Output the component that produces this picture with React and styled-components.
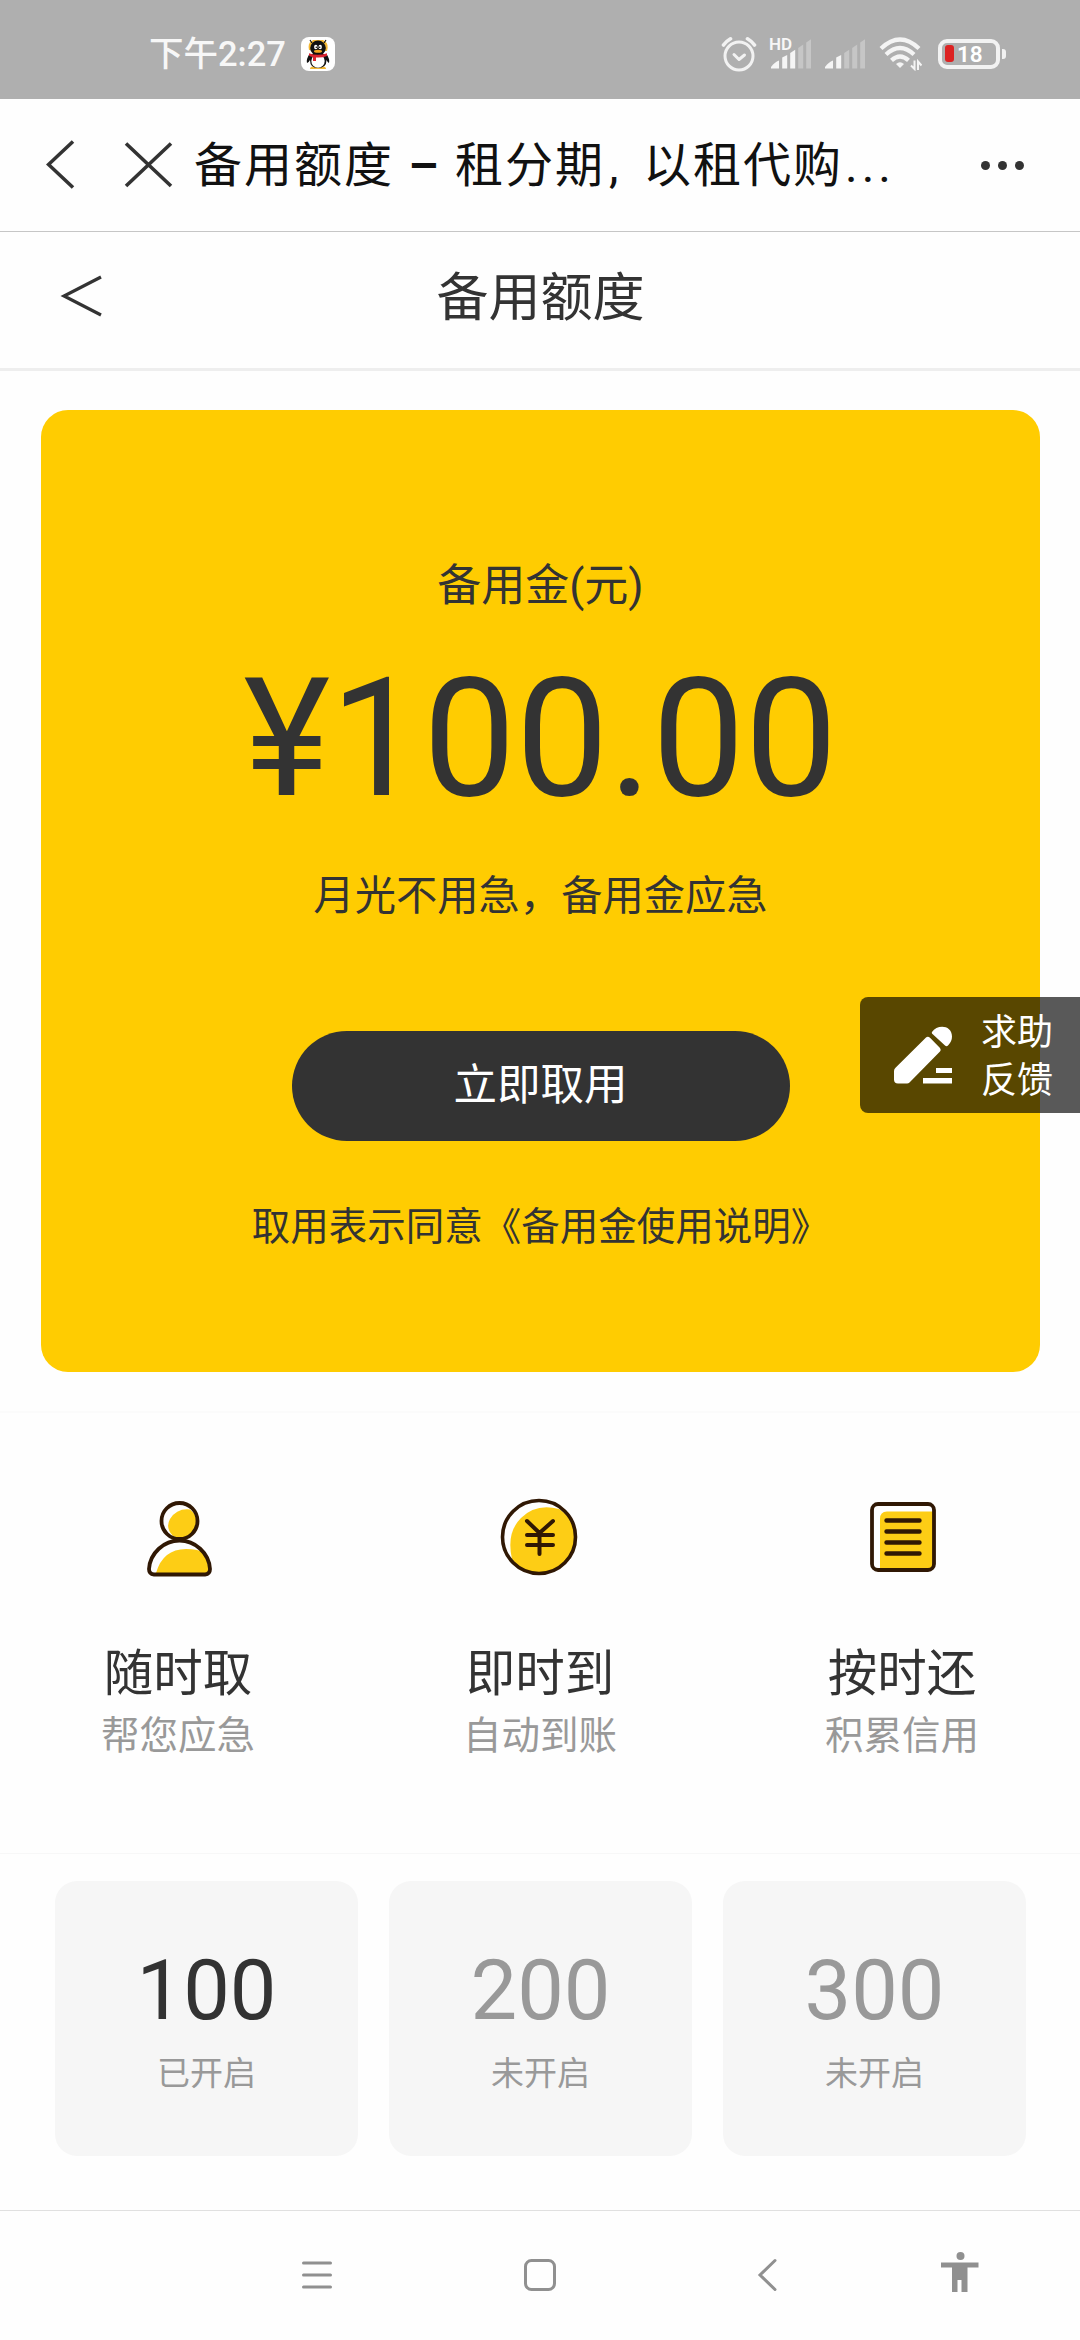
import React from 'react';
import styled, { createGlobalStyle } from 'styled-components';

const Global = createGlobalStyle`
  * { box-sizing: border-box; }
  body {
    margin: 0;
    background: #fefefe;
    font-family: Roboto, "Noto Sans CJK SC", sans-serif;
    color: #333;
  }
  svg { display: block; flex: none; }
`;

const Screen = styled.div`
  width: 1080px;
  height: 2340px;
  overflow: hidden;
  position: relative;
  display: flex;
  flex-direction: column;
  background: #fefefe;
`;

const StatusBar = styled.header`
  height: 99px;
  flex: none;
  background: #afafaf;
  display: flex;
  align-items: center;
  padding: 8px 74px 0 149px;
  color: #f7f7f7;
`;

const Clock = styled.span`
  font-size: 34.5px;
  font-weight: 500;
  line-height: 40px;
  width: 152px;
  padding-top: 1px;
  white-space: nowrap;
`;

const StatusIcons = styled.div`
  margin-left: auto;
  display: flex;
  align-items: center;
`;

const AppBar = styled.div`
  height: 133px;
  flex: none;
  border-bottom: 1px solid #c6c6c6;
  display: flex;
  align-items: center;
  padding: 0 56px 0 46px;
`;

const AppTitle = styled.h1`
  margin: 1px 0 0 20px;
  font-size: 48px;
  font-weight: 400;
  letter-spacing: 2px;
  line-height: 60px;
  color: #111;
  white-space: nowrap;
  display: flex;
`;

const Dash = styled.span`
  width: 61px;
  font-weight: 600;
  text-align: center;
`;

const Comma = styled.span`
  width: 38px;
  padding-left: 4px;
`;

const Ellipsis = styled.span`
  letter-spacing: 4px;
  padding-left: 2px;
`;

const More = styled.div`
  margin-left: auto;
  display: flex;
  gap: 8px;
  padding-top: 1px;
`;

const Dot = styled.i`
  width: 9px;
  height: 9px;
  border-radius: 50%;
  background: #333;
`;

const PageHeader = styled.div`
  height: 139px;
  flex: none;
  border-bottom: 3px solid #eeeeee;
  display: grid;
  grid-template-columns: 160px 1fr 160px;
  align-items: center;
`;

const BackSlot = styled.div`
  padding: 0 0 8px 60px;
`;

const PageTitle = styled.h2`
  margin: 0;
  padding: 0 0 3px 1px;
  text-align: center;
  font-size: 52px;
  font-weight: 400;
  line-height: 64px;
`;

const CreditSection = styled.section`
  height: 1042px;
  flex: none;
  padding: 39px 40px 0 41px;
  border-bottom: 2px solid #fbfbfb;
`;

const CreditCard = styled.div`
  height: 962px;
  border-radius: 27px;
  background: #ffcc01;
  display: flex;
  flex-direction: column;
  align-items: center;
`;

const Line = styled.p`
  margin: ${(p) => p.$top}px 0 0;
  font-size: ${(p) => p.$size}px;
  line-height: 60px;
  white-space: nowrap;
`;

const Amount = styled.strong`
  margin-top: 23px;
  font-size: 165px;
  font-weight: 400;
  line-height: 200px;
  white-space: nowrap;
`;

const TakeButton = styled.button`
  margin: 105px 0 0;
  width: 498px;
  height: 110px;
  border: 0;
  border-radius: 55px;
  background: #333;
  color: #fff;
  font: 400 43.5px/60px Roboto, "Noto Sans CJK SC", sans-serif;
  padding: 0 0 1px;
`;

const Features = styled.section`
  height: 441px;
  flex: none;
  padding-top: 76px;
  display: flex;
  justify-content: center;
  gap: 162px;
  border-bottom: 1px solid #f7f7f7;
`;

const Feature = styled.div`
  width: 200px;
  display: flex;
  flex-direction: column;
  align-items: center;
`;

const IconBox = styled.div`
  height: 100px;
  display: flex;
  align-items: center;
  padding: ${(p) => p.$pad};
`;

const FeatureTitle = styled.h3`
  margin: 52px 0 0;
  font-size: 49.5px;
  font-weight: 400;
  line-height: 66px;
`;

const FeatureNote = styled.p`
  margin: 2px 0 0;
  font-size: 38.5px;
  line-height: 54px;
  color: #999;
`;

const Tiers = styled.section`
  flex: none;
  height: 356px;
  padding: 27px 54px 0 55px;
  display: flex;
  justify-content: space-between;
`;

const Tier = styled.div`
  width: 303px;
  height: 275px;
  border-radius: 22px;
  background: #f6f6f6;
  display: flex;
  flex-direction: column;
  align-items: center;
`;

const TierValue = styled.span`
  margin-top: 60px;
  font-size: 83px;
  line-height: 100px;
  color: ${(p) => (p.$active ? '#333' : '#999')};
`;

const TierState = styled.span`
  margin-top: 9px;
  font-size: 33px;
  line-height: 48px;
  color: #999;
`;

const SystemNav = styled.nav`
  flex: 1;
  border-top: 1px solid #e0e0e0;
  display: grid;
  grid-template-columns: 223px 234px 184px 38px;
  align-items: start;
  padding: 40px 0 0 300px;
`;

const FeedbackTab = styled.aside`
  position: absolute;
  right: 0;
  top: 997px;
  width: 220px;
  height: 116px;
  border-radius: 8px 0 0 8px;
  background: rgba(0, 0, 0, 0.65);
  color: #fff;
  display: flex;
  align-items: center;
  padding-left: 34px;
`;

const FeedbackText = styled.span`
  margin: 3px 0 0 29px;
  width: 72px;
  font-size: 36px;
  line-height: 48px;
`;

const Penguin = () => (
  <svg width="34" height="34" viewBox="0 0 34 34">
    <rect width="34" height="34" rx="8" fill="#fff" />
    <path d="M8 13Q6.500 6 10.500 4.500L12 3h10l2 1.500Q28 7 26 14Z" fill="#f2b632" />
    <path d="M9 32Q9 29.500 12 29.500H22Q25 29.500 25 32Z" fill="#f2b632" />
    <path d="M8.500 17Q5 22 6 26Q7.500 26 9 23Q9 31 17 31Q25.500 31 25.500 23Q27 26 28 26Q29 22 25.500 17Z" fill="#111" />
    <ellipse cx="17" cy="24" rx="6.700" ry="6.700" fill="#fff" />
    <ellipse cx="17" cy="11" rx="7.800" ry="7.600" fill="#111" />
    <path d="M9 3l2 3M25 3l-2 3" stroke="#111" strokeWidth="1.200" />
    <ellipse cx="14.800" cy="10" rx="1.700" ry="2.300" fill="#fff" />
    <ellipse cx="19.200" cy="10" rx="1.700" ry="2.300" fill="#fff" />
    <circle cx="15.300" cy="10.300" r=".8" fill="#111" />
    <circle cx="18.700" cy="10.300" r=".8" fill="#111" />
    <ellipse cx="17" cy="14.300" rx="4" ry="1.500" fill="#f4a622" />
    <path d="M8 16.200Q17 19.500 26 16.200V19Q21 21 15 20.500V24H12V20Q9 19.500 8 18.500Z" fill="#dc2430" />
  </svg>
);

const AlarmSlot = styled.div`
  margin-right: 14px;
`;

const Alarm = () => (
  <AlarmSlot>
    <svg width="36" height="36" viewBox="0 0 36 36" fill="none" stroke="#f2f2f2" strokeLinecap="round">
      <circle cx="18" cy="20" r="14" strokeWidth="3" />
      <path d="M13 18.500l5 5 5.500-4.500" strokeWidth="3" strokeLinejoin="round" />
      <path d="M2.500 9Q5 5.500 9.500 2.800M33.500 9Q31 5.500 26.500 2.800" strokeWidth="3.600" />
    </svg>
  </AlarmSlot>
);

const BARS = [
  'M0 29.500V28Q3.500 23 8 21.500V29.500Z',
  'M11.200 29.500V18.600L16.200 16V29.500Z',
  'M19.200 29.500V14L24.200 10.800V29.500Z',
  'M27.200 29.500V9L32.200 5.500V29.500Z',
  'M35.200 29.500V3.500L40.200 0V29.500Z',
];

const SignalWrap = styled.div`
  position: relative;
  margin-right: 14px;
`;

const HdLabel = styled.span`
  position: absolute;
  left: -2px;
  top: -3px;
  font-size: 17px;
  font-weight: 600;
  line-height: 16px;
`;

const Signal = ({ strength, hd }) => (
  <SignalWrap>
    {hd && <HdLabel>HD</HdLabel>}
    <svg width="40" height="30" viewBox="0 0 40 30">
      {BARS.map((d, i) => (
        <path key={d} d={d} fill={i < strength ? '#f5f5f5' : '#c6c6c6'} />
      ))}
    </svg>
  </SignalWrap>
);

const Wifi = () => (
  <svg width="43" height="34" viewBox="0 0 43 34" fill="none" stroke="#f4f4f4">
    <path d="M2 11.500Q21 -6.500 40 11.500" strokeWidth="4.300" />
    <path d="M7 17.500Q21 4.500 35 17.500" strokeWidth="4.300" />
    <path d="M12.500 23.300Q21 15.500 29.500 23.300" strokeWidth="4.300" />
    <path d="M17 27Q21 23.500 25 27L21 31Z" fill="#f4f4f4" stroke="none" />
    <path d="M35.500 23.500V32L32 28.500M39 33V24.500L42.500 28.500" strokeWidth="2" />
  </svg>
);

const Battery = styled.div`
  margin-left: 16px;
  width: 62px;
  height: 30px;
  border: 4px solid #f2f2f2;
  border-radius: 9px;
  display: flex;
  align-items: center;
  padding-left: 3px;
  font-size: 22.5px;
  font-weight: 600;
  line-height: 22px;
  color: #fff;
`;

const BatteryLevel = styled.i`
  width: 9px;
  height: 17px;
  margin-right: 3px;
  border-radius: 3px;
  background: #dc2222;
`;

const BatteryTip = styled.i`
  width: 4px;
  height: 10px;
  margin-left: 2px;
  border-radius: 0 3px 3px 0;
  background: #f2f2f2;
`;

const PersonIcon = () => (
  <svg width="66" height="76" viewBox="0 0 66 76">
    <path d="M43 8.500A15 15 0 0 1 47 29A16 16 0 0 1 26 35Q18 27 23 18Q30 7 43 8.500Z" fill="#fdcd15" />
    <path d="M9 72Q16 48 39 48Q50 48 56 51Q61 58 62 72Z" fill="#fdcd15" />
    <circle cx="32.500" cy="20" r="18" fill="none" stroke="#301804" strokeWidth="3.800" />
    <path d="M7 73.500Q2 73 2 68C3 52 17 39.500 32.500 39.500C48 39.500 62 52 63 68Q63 73 58 73.500Z" fill="none" stroke="#301804" strokeWidth="3.800" />
  </svg>
);

const CoinIcon = () => (
  <svg width="78" height="78" viewBox="0 0 78 78">
    <path d="M59 11A37 37 0 0 1 76 39A37 37 0 0 1 39 76A36 36 0 0 1 12 61Q6 35 21 20T59 11Z" fill="#fdcd15" />
    <circle cx="39" cy="39" r="36.500" fill="none" stroke="#301804" strokeWidth="3.600" />
    <path d="M27 23L39.500 35L53 23M39.500 35V56M27 37H53M27 47H53" fill="none" stroke="#301804" strokeWidth="4" strokeLinecap="round" />
  </svg>
);

const BillIcon = () => (
  <svg width="66" height="70" viewBox="0 0 66 70">
    <path d="M10 67V17Q10 9.500 17 9.500H63V67Z" fill="#fdcd15" />
    <rect x="2" y="2" width="62" height="66" rx="6" fill="none" stroke="#301804" strokeWidth="3.800" />
    <path d="M16.500 18.500H49.500M16.500 29.500H49.500M16.500 40.500H49.500M16.500 51.500H49.500" stroke="#301804" strokeWidth="4.400" strokeLinecap="round" />
  </svg>
);

const PencilIcon = () => (
  <svg width="58" height="58" viewBox="0 0 58 58" fill="#fff">
    <path d="M32 11.500Q34 10 36 11.800L46 22Q47.500 24 46 25.500L15.500 56.500Q14.500 57.500 13 57.500H4Q0 57.500 0 53.500V45Q0 43 1.500 41.800Z" />
    <path d="M38 6C43-2 58-1.500 58 10.500Q58 15.500 54 19.500Q52.500 21 51 19.500L38.500 8Q37.500 7 38 6Z" />
    <path d="M42 42H58V47H42ZM29 52H58V57.500H29Z" />
  </svg>
);

const features = [
  { icon: <PersonIcon />, pad: '0 0 1px 3px', title: '随时取', note: '帮您应急' },
  { icon: <CoinIcon />, pad: '0 3px 5px 0', title: '即时到', note: '自动到账' },
  { icon: <BillIcon />, pad: '0 0 5px 1px', title: '按时还', note: '积累信用' },
];

const tiers = [
  { value: 100, state: '已开启', active: true },
  { value: 200, state: '未开启' },
  { value: 300, state: '未开启' },
];

export default function App() {
  return (
    <>
      <Global />
      <Screen>
        <StatusBar>
          <Clock>下午2:27</Clock>
          <Penguin />
          <StatusIcons>
            <Alarm />
            <Signal strength={3} hd />
            <Signal strength={2} />
            <Wifi />
            <Battery><BatteryLevel />18</Battery>
            <BatteryTip />
          </StatusIcons>
        </StatusBar>

        <AppBar>
          <svg width="128" height="50" viewBox="0 0 128 50" fill="none" stroke="#333" strokeWidth="3.600">
            <path d="M27 1.500L2.500 24.500L27 47.500M80 3.500L125 46M125 3.500L80 46" />
          </svg>
          <AppTitle>
            备用额度<Dash>–</Dash>租分期<Comma>,</Comma>以租代购<Ellipsis>...</Ellipsis>
          </AppTitle>
          <More><Dot /><Dot /><Dot /></More>
        </AppBar>

        <PageHeader>
          <BackSlot>
            <svg width="42" height="42" viewBox="0 0 42 42" fill="none" stroke="#333" strokeWidth="3.200">
              <path d="M41 2L4 21L41 40" />
            </svg>
          </BackSlot>
          <PageTitle>备用额度</PageTitle>
        </PageHeader>

        <CreditSection>
          <CreditCard>
            <Line $top={146} $size={44}>备用金(元)</Line>
            <Amount>¥100.00</Amount>
            <Line $top={27} $size={41.3}>月光不用急，备用金应急</Line>
            <TakeButton>立即取用</TakeButton>
            <Line $top={56} $size={38.5}>取用表示同意《备用金使用说明》</Line>
          </CreditCard>
        </CreditSection>

        <Features>
          {features.map((f) => (
            <Feature key={f.title}>
              <IconBox $pad={f.pad}>{f.icon}</IconBox>
              <FeatureTitle>{f.title}</FeatureTitle>
              <FeatureNote>{f.note}</FeatureNote>
            </Feature>
          ))}
        </Features>

        <Tiers>
          {tiers.map((t) => (
            <Tier key={t.value}>
              <TierValue $active={t.active}>{t.value}</TierValue>
              <TierState>{t.state}</TierState>
            </Tier>
          ))}
        </Tiers>

        <SystemNav>
          <svg width="34" height="48" viewBox="0 0 34 48" stroke="#909090" strokeWidth="3" strokeLinecap="round">
            <path d="M3.500 12H30.500M3.500 24H30.500M3.500 36H30.500" />
          </svg>
          <svg width="34" height="48" viewBox="0 0 34 48" fill="none" stroke="#909090" strokeWidth="3">
            <rect x="2.500" y="9.500" width="29" height="29" rx="6" />
          </svg>
          <svg width="20" height="48" viewBox="0 0 20 48" fill="none" stroke="#909090" strokeWidth="3" strokeLinecap="round">
            <path d="M18 9.500L3 24L18 38.500" />
          </svg>
          <svg width="38" height="48" viewBox="0 0 38 48" fill="#909090">
            <circle cx="19.500" cy="5" r="4" />
            <path d="M0 11.500H37.500V16.500H26.500V41H20.500V29H16.500V41H11V16.500H0Z" />
          </svg>
        </SystemNav>

        <FeedbackTab>
          <PencilIcon />
          <FeedbackText>求助反馈</FeedbackText>
        </FeedbackTab>
      </Screen>
    </>
  );
}
